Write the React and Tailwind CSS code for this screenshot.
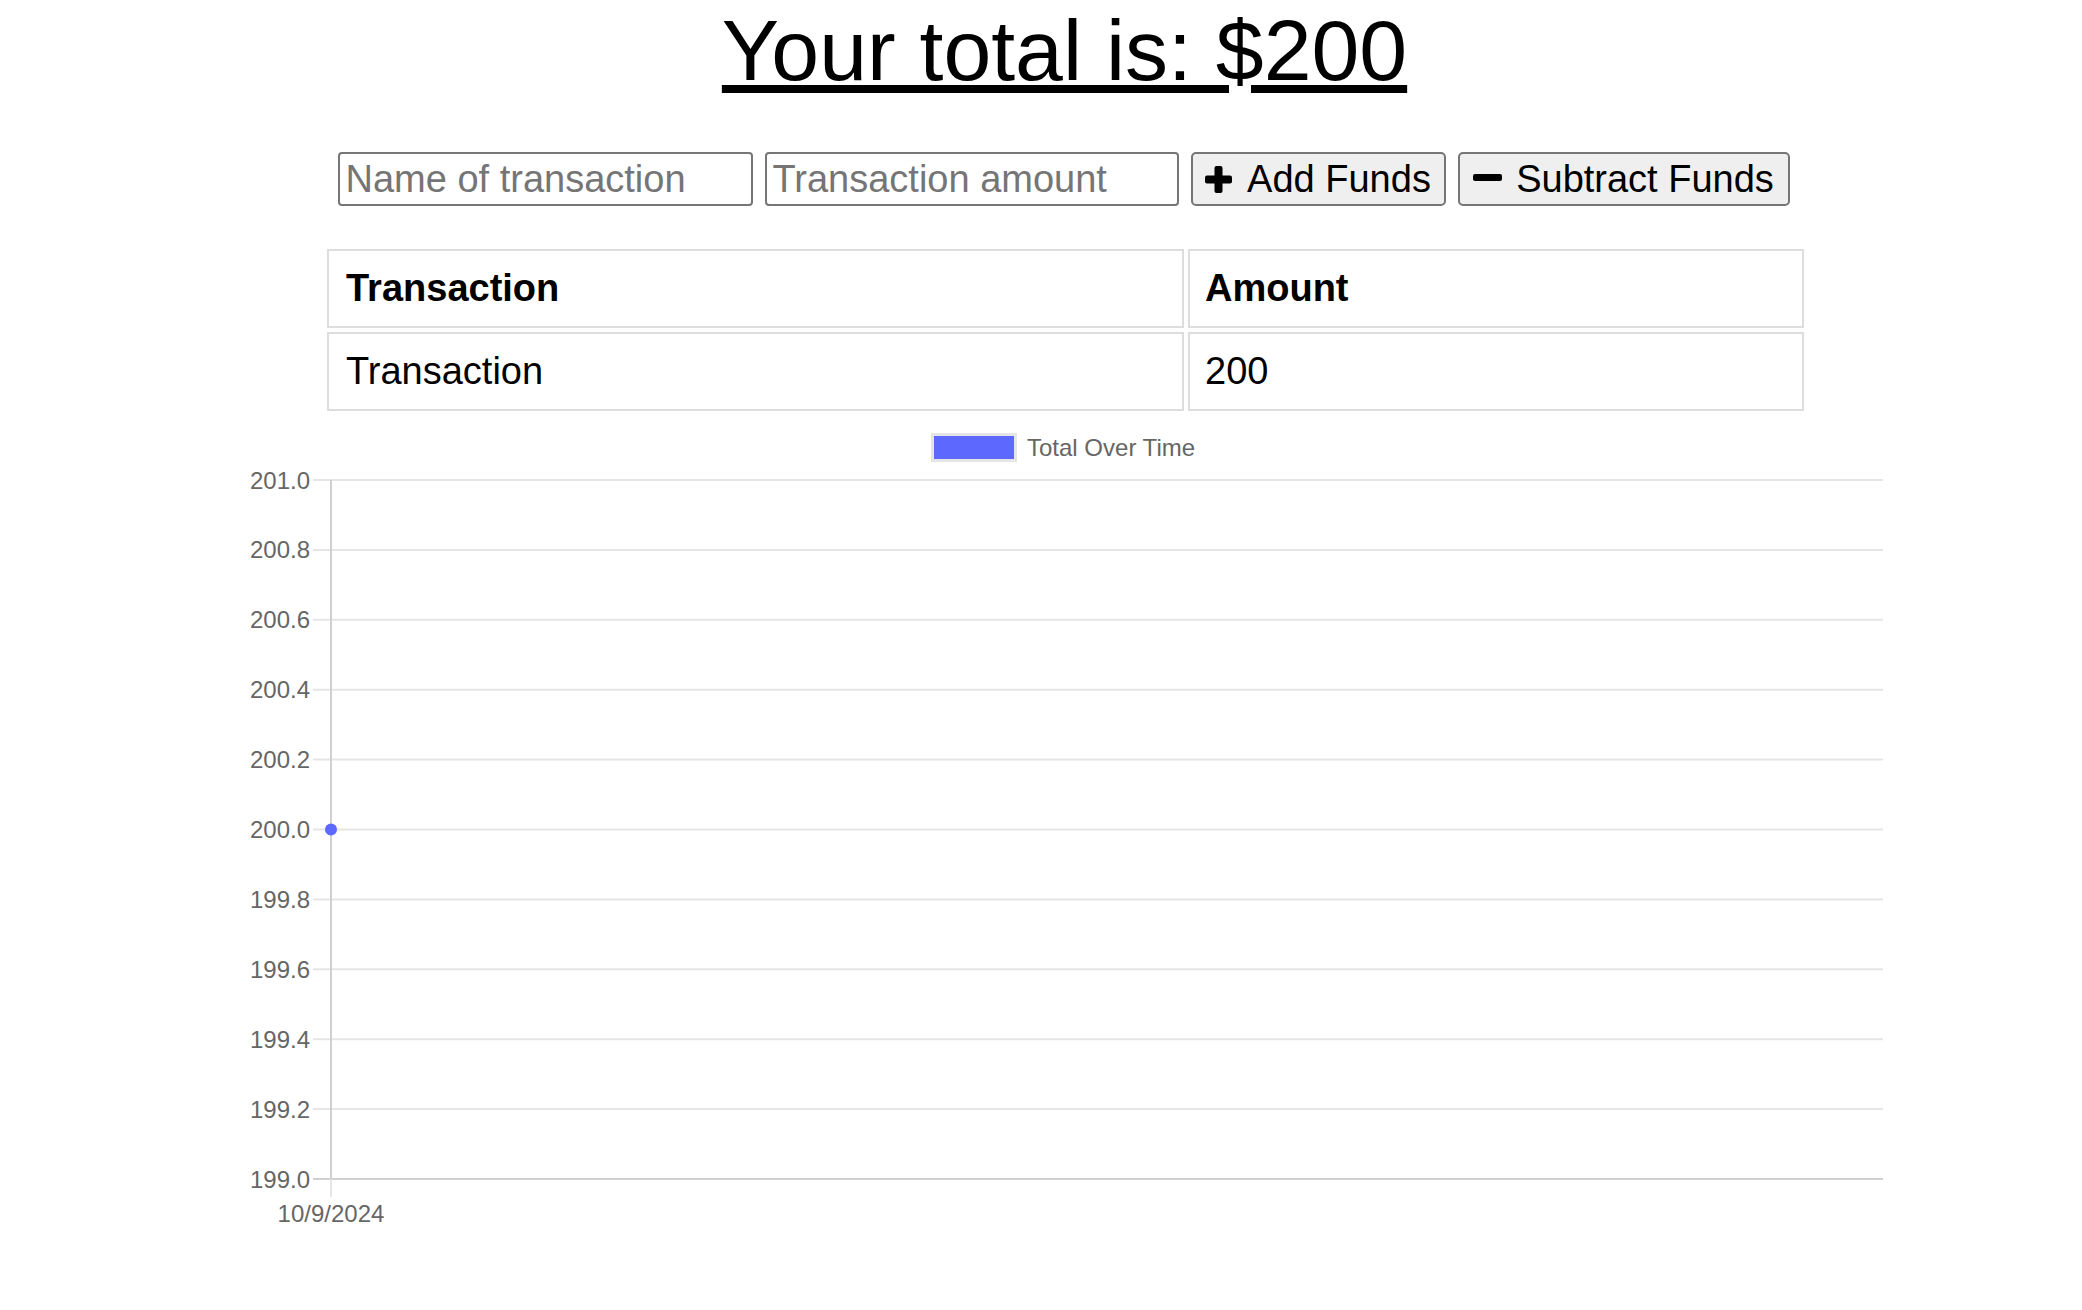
const ticks = ["201.0", "200.8", "200.6", "200.4", "200.2", "200.0", "199.8", "199.6", "199.4", "199.2", "199.0"];

const PlusIcon = () => (
  <svg width="27" height="27" viewBox="0 0 27 27" fill="currentColor">
    <rect x="9.5" y="0" width="8" height="27" rx="2" />
    <rect x="0" y="9.5" width="27" height="8" rx="2" />
  </svg>
);

const MinusIcon = () => (
  <svg width="29" height="7" viewBox="0 0 29 7" fill="currentColor" className="-translate-y-[2px]">
    <rect x="0" y="0" width="29" height="7" rx="2" />
  </svg>
);

const Chart = () => {
  const top = 61;
  const step = 69.9;
  const axisX = 95;
  const right = 1647;
  const bottom = top + step * 10;

  return (
    <svg width="1660" height="820" className="mt-[8px] block" fontFamily="'Liberation Sans', Arial, sans-serif">
      {/* legend */}
      <rect x="696.5" y="15.5" width="83" height="26" fill="#5d68ff" stroke="#e5e5e5" strokeWidth="3" />
      <text x="791" y="37" fontSize="24" fill="#666666">Total Over Time</text>

      {/* grid */}
      {ticks.map((t, i) => {
        const y = top + step * i;
        return (
          <g key={t}>
            <line x1="77" x2={right} y1={y} y2={y} stroke={i === 10 ? "#d0d0d0" : "#e5e5e5"} strokeWidth="2" />
            <text x="74" y={y + 8.5} fontSize="24" fill="#666666" textAnchor="end">{t}</text>
          </g>
        );
      })}

      {/* y axis */}
      <line x1={axisX} x2={axisX} y1={top} y2={bottom} stroke="#d0d0d0" strokeWidth="2" />
      <line x1={axisX} x2={axisX} y1={bottom} y2={bottom + 18} stroke="#e5e5e5" strokeWidth="2" />
      <text x={axisX} y="803" fontSize="24" fill="#666666" textAnchor="middle">10/9/2024</text>

      {/* data point */}
      <circle cx={axisX} cy={top + step * 5} r="6" fill="#5d68ff" />
    </svg>
  );
};

export default function App() {
  return (
    <div className="min-h-screen bg-white pl-[50px] text-black font-['Liberation_Sans',Arial,sans-serif]">
      <div className="flex flex-col items-center">
        <h1 className="mt-[2px] mr-[3px] text-[86px] leading-[96px] font-normal underline">Your total is: $200</h1>

        <div className="mt-[54px] mr-[5px] flex gap-[12px]">
          <input
            type="text"
            placeholder="Name of transaction"
            className="w-[415px] h-[54px] border-2 border-[#767676] rounded-[4px] px-[6px] text-[38px] bg-white placeholder:text-[#757575] outline-none"
          />
          <input
            type="number"
            placeholder="Transaction amount"
            className="w-[414px] h-[54px] border-2 border-[#767676] rounded-[4px] px-[6px] text-[38px] bg-white placeholder:text-[#757575] outline-none"
          />
          <button className="w-[255px] h-[54px] border-2 border-[#767676] rounded-[5px] bg-[#efefef] flex items-center justify-center gap-[15px] text-[38px]">
            <PlusIcon />
            <span>Add Funds</span>
          </button>
          <button className="w-[332px] h-[54px] border-2 border-[#767676] rounded-[5px] bg-[#efefef] flex items-center justify-center gap-[14px] text-[38px]">
            <MinusIcon />
            <span>Subtract Funds</span>
          </button>
        </div>

        <div className="mt-[43px] mr-[1px] grid grid-cols-[857px_616px] gap-[4px] text-[38px]">
          <div className="h-[79px] border-2 border-[#dddddd] flex items-center px-[17px] font-bold">Transaction</div>
          <div className="h-[79px] border-2 border-[#dddddd] flex items-center px-[15px] font-bold">Amount</div>
          <div className="h-[79px] border-2 border-[#dddddd] flex items-center px-[17px]">Transaction</div>
          <div className="h-[79px] border-2 border-[#dddddd] flex items-center px-[15px]">200</div>
        </div>

        <Chart />
      </div>
    </div>
  );
}
